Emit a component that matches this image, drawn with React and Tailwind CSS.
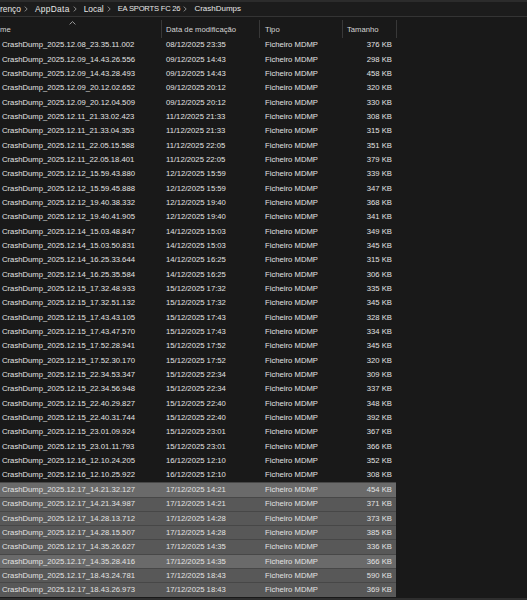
import React from 'react'

const rows = [
  ['2025.12.08_23.35.11.002', '08/12/2025 23:35', '376'],
  ['2025.12.09_14.43.26.556', '09/12/2025 14:43', '298'],
  ['2025.12.09_14.43.28.493', '09/12/2025 14:43', '458'],
  ['2025.12.09_20.12.02.652', '09/12/2025 20:12', '320'],
  ['2025.12.09_20.12.04.509', '09/12/2025 20:12', '330'],
  ['2025.12.11_21.33.02.423', '11/12/2025 21:33', '308'],
  ['2025.12.11_21.33.04.353', '11/12/2025 21:33', '315'],
  ['2025.12.11_22.05.15.588', '11/12/2025 22:05', '351'],
  ['2025.12.11_22.05.18.401', '11/12/2025 22:05', '379'],
  ['2025.12.12_15.59.43.880', '12/12/2025 15:59', '339'],
  ['2025.12.12_15.59.45.888', '12/12/2025 15:59', '347'],
  ['2025.12.12_19.40.38.332', '12/12/2025 19:40', '368'],
  ['2025.12.12_19.40.41.905', '12/12/2025 19:40', '341'],
  ['2025.12.14_15.03.48.847', '14/12/2025 15:03', '349'],
  ['2025.12.14_15.03.50.831', '14/12/2025 15:03', '345'],
  ['2025.12.14_16.25.33.644', '14/12/2025 16:25', '315'],
  ['2025.12.14_16.25.35.584', '14/12/2025 16:25', '306'],
  ['2025.12.15_17.32.48.933', '15/12/2025 17:32', '335'],
  ['2025.12.15_17.32.51.132', '15/12/2025 17:32', '345'],
  ['2025.12.15_17.43.43.105', '15/12/2025 17:43', '328'],
  ['2025.12.15_17.43.47.570', '15/12/2025 17:43', '334'],
  ['2025.12.15_17.52.28.941', '15/12/2025 17:52', '345'],
  ['2025.12.15_17.52.30.170', '15/12/2025 17:52', '320'],
  ['2025.12.15_22.34.53.347', '15/12/2025 22:34', '309'],
  ['2025.12.15_22.34.56.948', '15/12/2025 22:34', '337'],
  ['2025.12.15_22.40.29.827', '15/12/2025 22:40', '348'],
  ['2025.12.15_22.40.31.744', '15/12/2025 22:40', '392'],
  ['2025.12.15_23.01.09.924', '15/12/2025 23:01', '367'],
  ['2025.12.15_23.01.11.793', '15/12/2025 23:01', '366'],
  ['2025.12.16_12.10.24.205', '16/12/2025 12:10', '352'],
  ['2025.12.16_12.10.25.922', '16/12/2025 12:10', '308'],
  ['2025.12.17_14.21.32.127', '17/12/2025 14:21', '454', 'hot'],
  ['2025.12.17_14.21.34.987', '17/12/2025 14:21', '371', 'sel'],
  ['2025.12.17_14.28.13.712', '17/12/2025 14:28', '373', 'sel'],
  ['2025.12.17_14.28.15.507', '17/12/2025 14:28', '385', 'sel'],
  ['2025.12.17_14.35.26.627', '17/12/2025 14:35', '336', 'sel'],
  ['2025.12.17_14.35.28.416', '17/12/2025 14:35', '366', 'hot'],
  ['2025.12.17_18.43.24.781', '17/12/2025 18:43', '590', 'sel'],
  ['2025.12.17_18.43.26.973', '17/12/2025 18:43', '369', 'sel'],
]

const Chevron = () => (
  <svg width="4" height="6" viewBox="0 0 4 6" className="ml-[3px] mr-[7px] shrink-0">
    <path d="M0.8 0.6 L3.2 3 L0.8 5.4" fill="none" stroke="#9a9a9a" strokeWidth="0.9" />
  </svg>
)

const Row = ({ name, date, size, state }) => {
  const bg =
    state === 'hot'
      ? 'bg-[#6a6a6a] border-t border-[#474747]'
      : state === 'sel'
        ? 'bg-[#585858] border-t border-[#474747]'
        : ''
  return (
    <div className={`grid grid-cols-[161px_98px_83px_54px] h-[14.33px] items-center w-[396px] ${bg}`}>
      <div className="pl-[2px] whitespace-nowrap">CrashDump_{name}</div>
      <div className="pl-[5px] whitespace-nowrap">{date}</div>
      <div className="pl-[6px] whitespace-nowrap">Ficheiro MDMP</div>
      <div className="pr-[4px] text-right whitespace-nowrap">{size} KB</div>
    </div>
  )
}

export default function App() {
  return (
    <div className="w-[527px] h-[600px] overflow-hidden bg-[#191919] text-[#e2e2e2] text-[7.7px] leading-none font-['Liberation_Sans',Arial,sans-serif] flex flex-col">
      <div className="h-[2px] bg-[#2c2c2c]" />
      <div className="h-[15px] bg-[#1c1c1c] border-b border-[#343434] flex items-center text-[#e6e6e6] text-[8.4px] whitespace-nowrap">
        <span>renço</span>
        <Chevron />
        <span className="tracking-[0.3px]">AppData</span>
        <Chevron />
        <span>Local</span>
        <Chevron />
        <span className="text-[7.6px] tracking-[-0.2px]">EA SPORTS FC 26</span>
        <Chevron />
        <span className="text-[8px]">CrashDumps</span>
      </div>
      <div className="h-[21px] pt-[3px] grid grid-cols-[162px_98px_83px_54px] w-[397px] text-[#d4d4d4] shrink-0">
        <div className="relative border-r border-[#383838] flex items-center pt-[2px]">
          <span className="whitespace-nowrap">me</span>
          <svg width="7" height="4" viewBox="0 0 7 4" className="absolute left-[69px] top-[1px]">
            <path d="M0.6 3.4 L3.5 0.6 L6.4 3.4" fill="none" stroke="#a8a8a8" strokeWidth="0.9" />
          </svg>
        </div>
        <div className="border-r border-[#383838] flex items-center pt-[2px] pl-[4px] whitespace-nowrap">Data de modificação</div>
        <div className="border-r border-[#383838] flex items-center pt-[2px] pl-[5px]">Tipo</div>
        <div className="border-r border-[#383838] flex items-center pt-[2px] pl-[4px]">Tamanho</div>
      </div>
      <div className="flex flex-col">
        {rows.map(([name, date, size, state]) => (
          <Row key={name} name={name} date={date} size={size} state={state} />
        ))}
      </div>
      <div className="mt-auto h-[2px] bg-[#2e2e2e]" />
    </div>
  )
}
